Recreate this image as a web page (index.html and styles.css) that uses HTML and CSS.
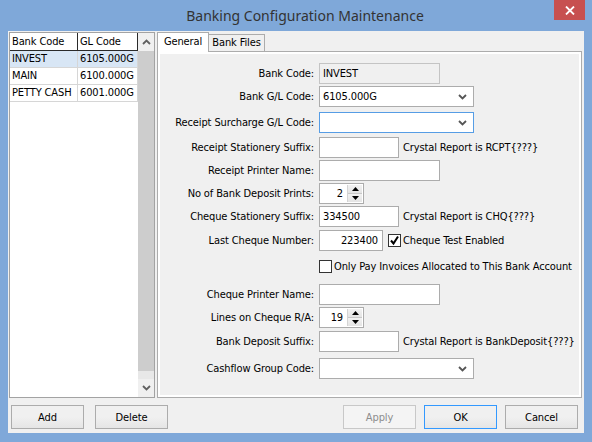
FILE: index.html
```html
<!DOCTYPE html>
<html lang="en">
  <head>
    <meta charset="UTF-8" />
    <title>Banking Configuration Maintenance</title>
    <link rel="stylesheet" href="styles.css">
  </head>
  <body>
    <div class="window">
      <div class="titlebar">
        <div class="titlebar__title">Banking Configuration Maintenance</div>
        <button class="titlebar__close">
          <svg width="10" height="9" viewBox="0 0 10 9"><path d="M1 0.5 L9 8.5 M9 0.5 L1 8.5" stroke="#fff" stroke-width="1.8" fill="none"/></svg>
        </button>
      </div>
      <div class="client">
        <div class="main">
          <div class="list">
            <div class="grid">
              <div class="grid__row grid__row--head">
                <div class="grid__cell">Bank Code</div>
                <div class="grid__cell">GL Code</div>
              </div>
              <div class="grid__row grid__row--selected">
                <div class="grid__cell">INVEST</div>
                <div class="grid__cell">6105.000G</div>
              </div>
              <div class="grid__row">
                <div class="grid__cell">MAIN</div>
                <div class="grid__cell">6100.000G</div>
              </div>
              <div class="grid__row">
                <div class="grid__cell">PETTY CASH</div>
                <div class="grid__cell">6001.000G</div>
              </div>
            </div>
            <div class="scroll">
              <div class="scroll__btn">
                <svg width="9" height="6" viewBox="0 0 9 6"><path d="M1 5 L4.5 1.5 L8 5" stroke="#606060" stroke-width="1.8" fill="none"/></svg>
              </div>
              <div class="scroll__thumb"></div>
              <div class="scroll__track"></div>
              <div class="scroll__btn">
                <svg width="9" height="6" viewBox="0 0 9 6"><path d="M1 1 L4.5 4.5 L8 1" stroke="#606060" stroke-width="1.8" fill="none"/></svg>
              </div>
            </div>
          </div>

          <div class="tabs">
            <div class="tabs__strip">
              <div class="tab tab--active">General</div>
              <div class="tab">Bank Files</div>
            </div>
            <div class="tabs__panel">
              <div class="form">
                <div class="row">
                  <label class="row__label">Bank Code:</label>
                  <input class="field field--readonly w-121" type="text" value="INVEST" readonly>
                </div>
                <div class="row">
                  <label class="row__label">Bank G/L Code:</label>
                  <div class="combo">
                    <span class="combo__text">6105.000G</span>
                    <svg class="combo__arrow" width="9" height="6" viewBox="0 0 9 6"><path d="M1 1 L4.5 4.5 L8 1" stroke="#555" stroke-width="1.8" fill="none"/></svg>
                  </div>
                </div>
                <div class="row mt-3">
                  <label class="row__label">Receipt Surcharge G/L Code:</label>
                  <div class="combo combo--focus">
                    <span class="combo__text"></span>
                    <svg class="combo__arrow" width="9" height="6" viewBox="0 0 9 6"><path d="M1 1 L4.5 4.5 L8 1" stroke="#555" stroke-width="1.8" fill="none"/></svg>
                  </div>
                </div>
                <div class="row mt-2">
                  <label class="row__label">Receipt Stationery Suffix:</label>
                  <input class="field w-80" type="text" value="">
                  <span class="row__note">Crystal Report is RCPT{???}</span>
                </div>
                <div class="row">
                  <label class="row__label">Receipt Printer Name:</label>
                  <input class="field w-121" type="text" value="">
                </div>
                <div class="row">
                  <label class="row__label">No of Bank Deposit Prints:</label>
                  <div class="spin">
                    <span class="spin__value">2</span>
                    <div class="spin__btns">
                      <div class="spin__btn"><svg width="7" height="4" viewBox="0 0 7 4"><path d="M0 4 L3.5 0 L7 4 Z" fill="#000"/></svg></div>
                      <div class="spin__btn"><svg width="7" height="4" viewBox="0 0 7 4"><path d="M0 0 L3.5 4 L7 0 Z" fill="#000"/></svg></div>
                    </div>
                  </div>
                </div>
                <div class="row">
                  <label class="row__label">Cheque Stationery Suffix:</label>
                  <input class="field w-80" type="text" value="334500">
                  <span class="row__note">Crystal Report is CHQ{???}</span>
                </div>
                <div class="row mt-1">
                  <label class="row__label">Last Cheque Number:</label>
                  <input class="field field--num w-64" type="text" value="223400">
                  <span class="check check--inline check--on">
                    <svg width="11" height="11" viewBox="0 0 11 11"><path d="M2 5.5 L4.5 8.5 L9 1.5" stroke="#000" stroke-width="2" fill="none"/></svg>
                  </span>
                  <span class="check__label">Cheque Test Enabled</span>
                </div>
                <div class="row mt-3">
                  <span class="row__label"></span>
                  <span class="check"></span>
                  <span class="check__label">Only Pay Invoices Allocated to This Bank Account</span>
                </div>
                <div class="row mt-5">
                  <label class="row__label">Cheque Printer Name:</label>
                  <input class="field w-121" type="text" value="">
                </div>
                <div class="row">
                  <label class="row__label">Lines on Cheque R/A:</label>
                  <div class="spin">
                    <span class="spin__value">19</span>
                    <div class="spin__btns">
                      <div class="spin__btn"><svg width="7" height="4" viewBox="0 0 7 4"><path d="M0 4 L3.5 0 L7 4 Z" fill="#000"/></svg></div>
                      <div class="spin__btn"><svg width="7" height="4" viewBox="0 0 7 4"><path d="M0 0 L3.5 4 L7 0 Z" fill="#000"/></svg></div>
                    </div>
                  </div>
                </div>
                <div class="row mt-1">
                  <label class="row__label">Bank Deposit Suffix:</label>
                  <input class="field w-80" type="text" value="">
                  <span class="row__note">Crystal Report is BankDeposit{???}</span>
                </div>
                <div class="row mt-4">
                  <label class="row__label">Cashflow Group Code:</label>
                  <div class="combo">
                    <span class="combo__text"></span>
                    <svg class="combo__arrow" width="9" height="6" viewBox="0 0 9 6"><path d="M1 1 L4.5 4.5 L8 1" stroke="#555" stroke-width="1.8" fill="none"/></svg>
                  </div>
                </div>
              </div>
            </div>
          </div>
        </div>

        <div class="footer">
          <button class="btn">Add</button>
          <button class="btn btn--gap">Delete</button>
          <button class="btn btn--push" disabled>Apply</button>
          <button class="btn btn--default">OK</button>
          <button class="btn">Cancel</button>
        </div>
      </div>
    </div>
  </body>
</html>
```

FILE: styles.css
```css
*,
*::before,
*::after {
  box-sizing: border-box;
  padding: 0;
  margin: 0;
}

:root {
  --frame: #7fa8d9;
  --face: #f0f0f0;
  --edge: #acacac;
  --grid-line: #d6d6d6;
  --text: #000;
}
body {
  width: 592px;
  height: 442px;
  overflow: hidden;
  font-family: "DejaVu Sans Condensed", "DejaVu Sans", sans-serif;
  font-size: 11px;
  letter-spacing: -0.12px;
  color: var(--text);
}
.window {
  display: flex;
  flex-direction: column;
  width: 592px;
  height: 442px;
  background-color: var(--frame);
  padding-bottom: 9px;
}

/* title bar */
.titlebar {
  display: flex;
  align-items: flex-start;
  height: 31px;
  padding: 0 7px 0 56px;
}
.titlebar__title {
  flex: 1;
  text-align: center;
  line-height: 32px;
  font-family: "Noto Sans", "Open Sans", sans-serif;
  font-size: 14px;
  letter-spacing: 0;
  color: #333;
}
.titlebar__close {
  display: flex;
  align-items: center;
  justify-content: center;
  width: 31px;
  height: 20px;
  border: none;
  background-color: #c75050;
}

/* client area */
.client {
  flex: 1;
  display: flex;
  flex-direction: column;
  margin: 0 8px;
  padding: 1px 2px 0 1px;
  background-color: var(--face);
}
.main {
  display: flex;
  gap: 2px;
  height: 366px;
}

/* bank list */
.list {
  display: flex;
  width: 146px;
  border: 1px solid #a3a3a3;
  background-color: #fff;
}
.grid {
  width: 128px;
}
.grid__row {
  display: grid;
  grid-template-columns: 68px 60px;
  height: 17px;
}
.grid__cell {
  padding-left: 2px;
  line-height: 16px;
  white-space: nowrap;
  overflow: hidden;
  border-right: 1px solid var(--grid-line);
  border-bottom: 1px solid var(--grid-line);
}
.grid__row--head {
  height: 18px;
}
.grid__row--head .grid__cell {
  line-height: 17px;
  border-color: #2a2a2a;
}
.grid__row--selected {
  background-color: #d8e6f5;
}
.scroll {
  display: flex;
  flex-direction: column;
  width: 16px;
  background-color: #e8e8e8;
}
.scroll__btn {
  display: flex;
  align-items: center;
  justify-content: center;
  height: 18px;
  background-color: var(--face);
}
.scroll__thumb {
  height: 320px;
  background-color: #cdcdcd;
}
.scroll__track {
  flex: 1;
}

/* tabs */
.tabs {
  display: flex;
  flex-direction: column;
  width: 425px;
}
.tabs__strip {
  display: flex;
  align-items: flex-end;
  height: 19px;
  position: relative;
  z-index: 1;
}
.tab {
  width: 56px;
  height: 17px;
  line-height: 16px;
  text-align: center;
  border: 1px solid var(--edge);
  border-left: none;
  border-bottom: none;
  background-color: var(--face);
}
.tab--active {
  width: 52px;
  height: 20px;
  line-height: 18px;
  margin-bottom: -1px;
  border-left: 1px solid var(--edge);
  background-color: #fff;
}
.tabs__panel {
  flex: 1;
  border: 1px solid var(--edge);
  background-color: var(--face);
  box-shadow: inset 0 0 0 2px #fff;
}

/* form */
.form {
  display: flex;
  flex-direction: column;
  gap: 2px;
  padding-top: 11px;
}
.row {
  display: flex;
  align-items: center;
  height: 21px;
}
.row__label {
  width: 156px;
  margin-right: 5px;
  text-align: right;
  white-space: nowrap;
}
.row__note {
  margin-left: 4px;
  white-space: nowrap;
}
.mt-1 { margin-top: 1px; }
.mt-2 { margin-top: 2px; }
.mt-3 { margin-top: 3px; }
.mt-4 { margin-top: 4px; }
.mt-5 { margin-top: 5px; }

.field {
  height: 21px;
  padding: 0 3px;
  border: 1px solid var(--edge);
  background-color: #fff;
  font: inherit;
  letter-spacing: inherit;
  color: var(--text);
  outline: none;
}
.field--readonly {
  background-color: var(--face);
  border-color: #c4c4c4;
}
.field--num {
  text-align: right;
  padding-right: 4px;
}
.w-64 { width: 64px; }
.w-80 { width: 80px; }
.w-121 { width: 121px; }

.combo {
  display: flex;
  align-items: center;
  width: 155px;
  height: 21px;
  padding: 0 6px 0 3px;
  border: 1px solid var(--edge);
  background-color: #fff;
}
.combo--focus {
  border-color: #569de5;
}
.combo__text {
  flex: 1;
}

.spin {
  display: flex;
  align-items: center;
  width: 45px;
  height: 21px;
  padding: 1px;
  border: 1px solid var(--edge);
  background-color: #fff;
}
.spin__value {
  flex: 1;
  text-align: right;
  padding-right: 4px;
}
.spin__btns {
  display: flex;
  flex-direction: column;
  width: 15px;
  height: 100%;
  border-left: 1px solid #d4d4d4;
}
.spin__btn {
  flex: 1;
  display: flex;
  align-items: center;
  justify-content: center;
  background: linear-gradient(#f2f2f2, #e4e4e4);
}
.spin__btn + .spin__btn {
  border-top: 1px solid #c9c9c9;
}

.check {
  display: flex;
  align-items: center;
  justify-content: center;
  width: 13px;
  height: 13px;
  border: 1px solid #333;
  background-color: #fff;
}
.check--inline {
  margin-left: 5px;
}
.check__label {
  margin-left: 2px;
  white-space: nowrap;
}

/* buttons */
.footer {
  display: flex;
  padding: 7px 4px 0 2px;
}
.btn {
  width: 73px;
  height: 24px;
  border: 1px solid var(--edge);
  background: linear-gradient(#f0f0f0 50%, #e5e5e5);
  font: inherit;
  letter-spacing: inherit;
  color: var(--text);
}
.btn--gap {
  margin-left: 11px;
}
.btn--push {
  margin-left: auto;
  margin-right: 8px;
}
.btn--default {
  margin-right: 8px;
  border-color: #3399ff;
}
.btn:disabled {
  color: #8d8d8d;
  border-color: #c8c8c8;
  background: #f4f4f4;
}
```
